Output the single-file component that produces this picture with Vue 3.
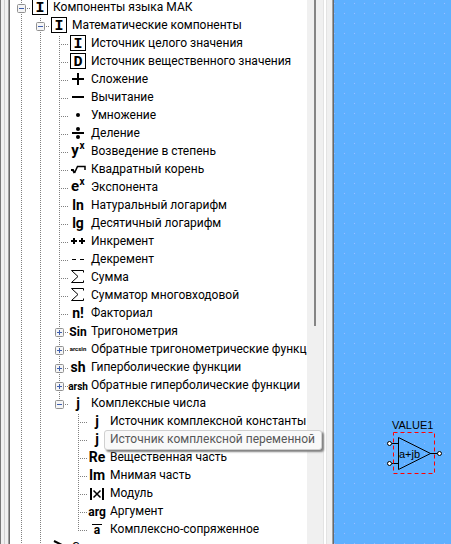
<script setup>
const rows = [
  { depth: 0, toggle: 'minus', icon: 'box', glyph: 'I', label: 'Компоненты языка МАК' },
  { depth: 1, toggle: 'minus', icon: 'box', glyph: 'I', label: 'Математические компоненты' },
  { depth: 2, icon: 'box', glyph: 'I', label: 'Источник целого значения' },
  { depth: 2, icon: 'box', glyph: 'D', label: 'Источник вещественного значения' },
  { depth: 2, icon: 'plus', label: 'Сложение' },
  { depth: 2, icon: 'minus', label: 'Вычитание' },
  { depth: 2, icon: 'dot', label: 'Умножение' },
  { depth: 2, icon: 'divide', label: 'Деление' },
  { depth: 2, icon: 'power', glyph: 'y', label: 'Возведение в степень' },
  { depth: 2, icon: 'root', label: 'Квадратный корень' },
  { depth: 2, icon: 'power', glyph: 'e', label: 'Экспонента' },
  { depth: 2, icon: 'text', glyph: 'ln', label: 'Натуральный логарифм' },
  { depth: 2, icon: 'text', glyph: 'lg', label: 'Десятичный логарифм' },
  { depth: 2, icon: 'increment', label: 'Инкремент' },
  { depth: 2, icon: 'decrement', label: 'Декремент' },
  { depth: 2, icon: 'sum', label: 'Сумма' },
  { depth: 2, icon: 'sum', label: 'Сумматор многовходовой' },
  { depth: 2, icon: 'text', glyph: 'n!', label: 'Факториал' },
  { depth: 2, toggle: 'plus', icon: 'small', glyph: 'Sin', label: 'Тригонометрия' },
  { depth: 2, toggle: 'plus', icon: 'tiny', glyph: 'arcsin', label: 'Обратные тригонометрические функц' },
  { depth: 2, toggle: 'plus', icon: 'text', glyph: 'sh', label: 'Гиперболические функции' },
  { depth: 2, toggle: 'plus', icon: 'sup', glyph: 'arsh', label: 'Обратные гиперболические функции' },
  { depth: 2, toggle: 'minus', last: true, icon: 'text', glyph: 'j', label: 'Комплексные числа' },
  { depth: 3, icon: 'text', glyph: 'j', label: 'Источник комплексной константы' },
  { depth: 3, icon: 'text', glyph: 'j', label: 'Источник комплексной переменной', tip: true },
  { depth: 3, icon: 'text', glyph: 'Re', label: 'Вещественная часть' },
  { depth: 3, icon: 'text', glyph: 'Im', label: 'Мнимая часть' },
  { depth: 3, icon: 'modulus', label: 'Модуль' },
  { depth: 3, icon: 'small', glyph: 'arg', label: 'Аргумент' },
  { depth: 3, last: true, icon: 'conjugate', glyph: 'a', label: 'Комплексно-сопряженное' },
  { depth: 1, icon: 'compare', label: 'Сравнение' },
]

// Kind of guide drawn in each indent column of a row.
function guides(row) {
  return Array.from({ length: row.depth + 1 }, (_, i) => {
    if (i === row.depth) return row.last ? 'elbow' : 'tee'
    return i === 2 ? 'blank' : 'line'
  })
}
</script>

<template>
  <main class="window">
    <div class="grip"></div>
    <nav class="tree" aria-label="Компоненты">
      <ul class="rows">
        <li v-for="(row, n) in rows" :key="n" class="row">
          <span v-for="(kind, i) in guides(row)" :key="i" class="guide" :class="kind">
            <button
              v-if="row.toggle && i === row.depth"
              class="toggle"
              type="button"
              :aria-label="row.label"
              :aria-expanded="row.toggle === 'minus'"
            >
              <svg width="9" height="9" viewBox="0 0 9 9">
                <rect x=".5" y=".5" width="8" height="8" rx="1" fill="#f5f5f5" stroke="#919191" />
                <path d="M2 4.500h5" stroke="#3f5fae" />
                <path v-if="row.toggle === 'plus'" d="M4.500 2v5" stroke="#3f5fae" />
              </svg>
            </button>
          </span>
          <svg class="icon" width="18" height="18" viewBox="-1 -1 18 18" aria-hidden="true">
            <template v-if="row.icon === 'box'">
              <rect x=".5" y="-.5" width="15" height="15" fill="#fff" stroke="#000" />
              <text class="g-mono" x="8" y="12">{{ row.glyph }}</text>
            </template>
            <path v-else-if="row.icon === 'plus'" class="thick" d="M2 7h12M8 1v12" />
            <path v-else-if="row.icon === 'minus'" class="thick" d="M2 7h12" />
            <circle v-else-if="row.icon === 'dot'" cx="8" cy="7" r="2" />
            <template v-else-if="row.icon === 'divide'">
              <path class="thick" d="M2 7h12" />
              <circle cx="8" cy="3" r="2" />
              <circle cx="8" cy="11" r="2" />
            </template>
            <template v-else-if="row.icon === 'power'">
              <text class="g-power" x="5" y="11">{{ row.glyph }}</text>
              <text class="g-sup" x="12" y="5">x</text>
            </template>
            <template v-else-if="row.icon === 'root'">
              <path class="thick" d="M1 8h2l1.500 3" />
              <path class="bar" d="M4.500 11L7.500 4.500H15V8" />
            </template>
            <path v-else-if="row.icon === 'increment'" class="thick" d="M1 7h6M4 4v6M9 7h6M12 4v6" />
            <path v-else-if="row.icon === 'decrement'" class="thin" d="M2 7.500h4M10 7.500h4" />
            <path v-else-if="row.icon === 'sum'" class="thin" d="M13.500 2.500V.5H1.500L8 6.500l-6.500 6h12v-2" />
            <template v-else-if="row.icon === 'modulus'">
              <path class="thick" d="M2 2v12M14 2v12" />
              <path class="bar" d="M4.500 4.500l7 7M11.500 4.500l-7 7" />
            </template>
            <template v-else-if="row.icon === 'conjugate'">
              <path class="thin" d="M3 2.500h10" />
              <text class="g-small" x="8" y="12">{{ row.glyph }}</text>
            </template>
            <path v-else-if="row.icon === 'compare'" class="thick" d="M3 1l8 4-8 4" />
            <text v-else-if="row.icon === 'tiny'" class="g-tiny" x="8" y="9">{{ row.glyph }}</text>
            <text v-else :class="'g-' + row.icon" x="8" y="12">{{ row.glyph }}</text>
          </svg>
          <span class="label">{{ row.label }}</span>
          <span v-if="row.tip" class="tip" role="tooltip">{{ row.label }}</span>
        </li>
      </ul>
      <div class="scroll"><div class="thumb"></div></div>
    </nav>
    <div class="splitter"></div>
    <section class="canvas">
      <svg class="block" width="60" height="64" viewBox="0 0 60 64">
        <text class="block-text" x="5" y="13">VALUE1</text>
        <path class="thin" d="M5 27.500h6M5 47.500h6M43 37.500h8" />
        <path class="thin" d="M11.500 21.500v32l32-16z" />
        <rect x="6.500" y="16.500" width="41" height="41" fill="none" stroke="#f00" stroke-dasharray="4 3" />
        <circle class="pin" cx="2.500" cy="27.500" r="2" />
        <circle class="pin" cx="2.500" cy="47.500" r="2" />
        <circle class="pin" cx="52.500" cy="37.500" r="2" />
        <text class="block-text" x="12" y="42">a+jb</text>
      </svg>
    </section>
  </main>
</template>

<style>
body {
  margin: 0;
}
</style>

<style scoped>
.window {
  display: flex;
  height: 100vh;
  overflow: hidden;
  background: #f0f0f0;
  font-family: Roboto, "Noto Sans", sans-serif;
  font-size: 12px;
  color: #000;
}
.grip {
  flex: none;
  box-sizing: border-box;
  width: 10px;
  border-left: 1px solid #787878;
  border-right: 1px solid #696969;
  background: linear-gradient(90deg, #f0f0f0 3px, #d0d0d0 3px, #d0d0d0 4px, #f0f0f0 4px, #f0f0f0 7px, #a0a0a0 7px);
}
.tree {
  flex: 0 0 313px;
  display: flex;
  min-width: 0;
  background: #fff;
}
.rows {
  position: relative;
  z-index: 1;
  flex: 1;
  min-width: 0;
  margin: -1px 0 0;
  padding: 0 0 0 2px;
  list-style: none;
}
.row {
  position: relative;
  display: flex;
  align-items: center;
  height: 18px;
}
.guide {
  flex: none;
  position: relative;
  width: 19px;
  height: 18px;
  background-repeat: no-repeat;
}
.line,
.tee,
.elbow {
  --v: repeating-linear-gradient(180deg, transparent 0 1px, #808080 1px 2px);
  --h: repeating-linear-gradient(90deg, #808080 0 1px, transparent 1px 2px);
}
.line {
  background-image: var(--v);
  background-size: 1px 18px;
  background-position: 9px 0;
}
.tee {
  background-image: var(--v), var(--h);
  background-size: 1px 18px, 10px 1px;
  background-position: 9px 0, 9px 9px;
}
.elbow {
  background-image: var(--v), var(--h);
  background-size: 1px 10px, 10px 1px;
  background-position: 9px 0, 9px 9px;
}
.toggle {
  display: block;
  width: 9px;
  height: 9px;
  margin: 5px;
  padding: 0;
  border: 0;
  background: none;
}
.toggle svg {
  display: block;
}
.icon {
  flex: none;
  overflow: visible;
}
.label {
  height: 18px;
  margin-left: 4px;
  white-space: nowrap;
  line-height: 17px;
}
.tip {
  position: absolute;
  z-index: 1;
  left: 92px;
  top: -1px;
  box-sizing: border-box;
  height: 20px;
  padding: 0 6px 0 5px;
  border: 1px solid #d0d0d0;
  border-radius: 3px;
  background: #f9f9f9;
  box-shadow: 2px 2px 2px #808080;
  color: #575757;
  line-height: 17px;
  white-space: nowrap;
}
.scroll {
  flex: none;
  width: 16px;
  background: #f0f0f0;
}
.thumb {
  width: 2px;
  height: 60%;
  margin-left: 7px;
  background: #858585;
}
.splitter {
  flex: none;
  box-sizing: border-box;
  width: 11px;
  border-left: 1px solid #e3e3e3;
  border-right: 1px solid #696969;
  background: linear-gradient(90deg, #fff 2px, #e3e3e3 2px, #e3e3e3 3px, #f0f0f0 3px, #f0f0f0 8px, #a0a0a0 8px);
}
.canvas {
  position: relative;
  flex: 1;
  min-width: 0;
  background: conic-gradient(from 270deg at 1px 1px, #a4b8ff 90deg, #5eb0ff 0) 0 3px / 10px 10px;
}
.block {
  position: absolute;
  left: 53px;
  top: 416px;
}
.thick {
  fill: none;
  stroke: #000;
  stroke-width: 2;
}
.bar {
  fill: none;
  stroke: #000;
  stroke-width: 1.5;
}
.thin {
  fill: none;
  stroke: #000;
}
.pin {
  fill: #fff;
  stroke: #000;
}
.block-text {
  font-family: "Liberation Sans", sans-serif;
  font-size: 11px;
}
.g-mono,
.g-text,
.g-power,
.g-small,
.g-tiny,
.g-sup {
  font-family: Roboto, sans-serif;
  font-weight: 700;
  text-anchor: middle;
}
.g-mono {
  font-family: "Liberation Mono", monospace;
  font-size: 15px;
}
.g-text {
  font-size: 14px;
}
.g-power {
  font-size: 15px;
}
.g-small {
  font-size: 12px;
}
.g-tiny {
  font-size: 6px;
}
.g-sup {
  font-size: 10px;
}
</style>
